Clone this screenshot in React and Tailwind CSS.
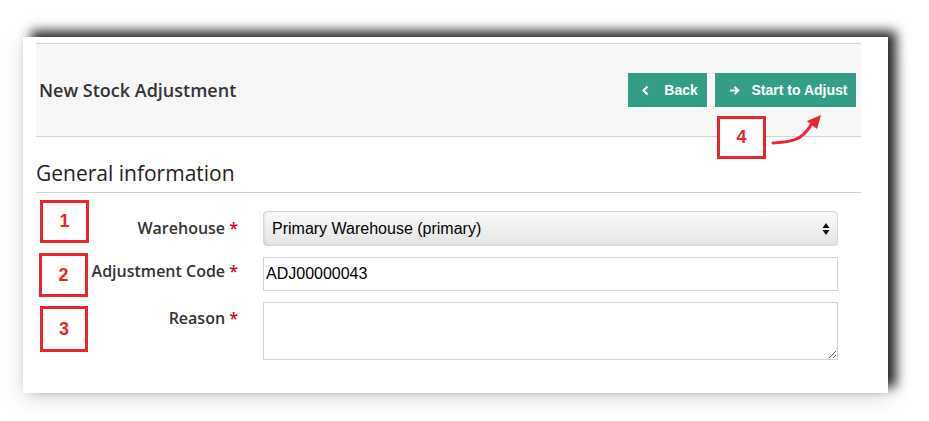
import React from "react";

const sans = { fontFamily: '"Open Sans", "Noto Sans", sans-serif' };

function NumBox({ n, className }) {
  return (
    <div
      className={`absolute flex items-center justify-center border-[3px] border-[#e8262b] bg-white text-[18px] font-bold text-[#e8262b] ${className}`}
      style={{ fontFamily: '"Liberation Sans", Arial, sans-serif' }}
    >
      {n}
    </div>
  );
}

function Label({ children, className = "" }) {
  return (
    <div className={`w-[204px] shrink-0 pr-[2px] text-right text-[16px] font-semibold text-[#333] ${className}`} style={sans}>
      {children} <span className="text-[#d0021b]">*</span>
    </div>
  );
}

export default function App() {
  const helv = { fontFamily: '"Liberation Sans", Arial, Helvetica, sans-serif' };
  return (
    <div className="min-h-[421px] w-[929px] bg-white pl-[23px] pt-[37px]">
      <div className="relative h-[356px] w-[865px] bg-white pl-[13px] pr-[27px] pt-[6px] shadow-[8px_-6px_11px_rgba(0,0,0,0.85),0_6px_22px_rgba(0,0,0,0.13)]">
        {/* Header */}
        <div className="flex h-[94px] items-center justify-between border-y border-[#d4d4d4] bg-[#f7f7f7] pl-[3px] pr-[5px]">
          <h1 className="text-[18px] font-semibold text-[#333]" style={sans}>
            New Stock Adjustment
          </h1>
          <div className="flex gap-[8px]" style={helv}>
            <button className="flex h-[34px] w-[79px] items-center justify-center gap-[14px] bg-[#339e88] pl-[4px] text-[14px] font-bold text-white">
              <svg width="9" height="11" viewBox="0 0 9 11" fill="none">
                <path d="M6.5 1.5 L2.5 5.5 L6.5 9.5" stroke="white" strokeWidth="2.2" />
              </svg>
              Back
            </button>
            <button className="flex h-[34px] w-[141px] items-center justify-center gap-[12px] bg-[#339e88] pl-[5px] text-[14px] font-bold text-white">
              <svg width="11" height="11" viewBox="0 0 11 11" fill="none">
                <path d="M1 5.5 H9 M5.5 1.8 L9.2 5.5 L5.5 9.2" stroke="white" strokeWidth="2" />
              </svg>
              Start to Adjust
            </button>
          </div>
        </div>

        {/* Section title */}
        <div className="border-b border-[#d0d0d0] pb-[5px] pt-[22px]">
          <h2 className="text-[21px] leading-[28px] text-[#222]" style={sans}>
            General information
          </h2>
        </div>

        {/* Form */}
        <div className="flex flex-col gap-[11px] pt-[18px]">
          <div className="flex items-center">
            <Label className="-mt-[2px]">Warehouse</Label>
            <div
              className="ml-[23px] flex h-[35px] w-[575px] items-center justify-between rounded-[4px] border border-[#d6d6d6] bg-gradient-to-b from-[#fafafa] to-[#e4e4e4] pl-[8px] pr-[7px] text-[16px] text-black shadow-[inset_1px_0_2px_rgba(0,0,0,0.08)]"
              style={helv}
            >
              <span>Primary Warehouse (primary)</span>
              <svg width="8" height="14" viewBox="0 0 8 14">
                <path d="M4 1 L7.5 6 H0.5 Z M0.5 8 H7.5 L4 13 Z" fill="#111" />
              </svg>
            </div>
          </div>
          <div className="flex items-center">
            <Label className="-mt-[6px]">Adjustment Code</Label>
            <input
              readOnly
              value="ADJ00000043"
              className="ml-[23px] h-[34px] w-[575px] border border-[#d3d3dc] bg-white px-[2px] text-[16px] text-black outline-none"
              style={helv}
            />
          </div>
          <div className="flex items-start">
            <Label className="pt-[4px]">Reason</Label>
            <textarea
              readOnly
              className="ml-[23px] h-[58px] w-[575px] border border-[#d3d3dc] bg-white outline-none"
            />
          </div>
        </div>

        {/* Annotations */}
        <NumBox n="1" className="left-[17px] top-[163px] h-[43px] w-[49px]" />
        <NumBox n="2" className="left-[16px] top-[216px] h-[44px] w-[49px]" />
        <NumBox n="3" className="left-[17px] top-[269px] h-[46px] w-[48px]" />
        <NumBox n="4" className="left-[694px] top-[79px] h-[43px] w-[49px]" />
        <svg className="absolute left-[748px] top-[74px]" width="56" height="36" viewBox="0 0 56 36" fill="none">
          <path d="M2 32 C 18 31, 30 31, 40 14" stroke="#e8262b" strokeWidth="3" strokeLinecap="round" />
          <path d="M36 10 L50 4 L46 18 Z" fill="#e8262b" />
        </svg>
      </div>
    </div>
  );
}
